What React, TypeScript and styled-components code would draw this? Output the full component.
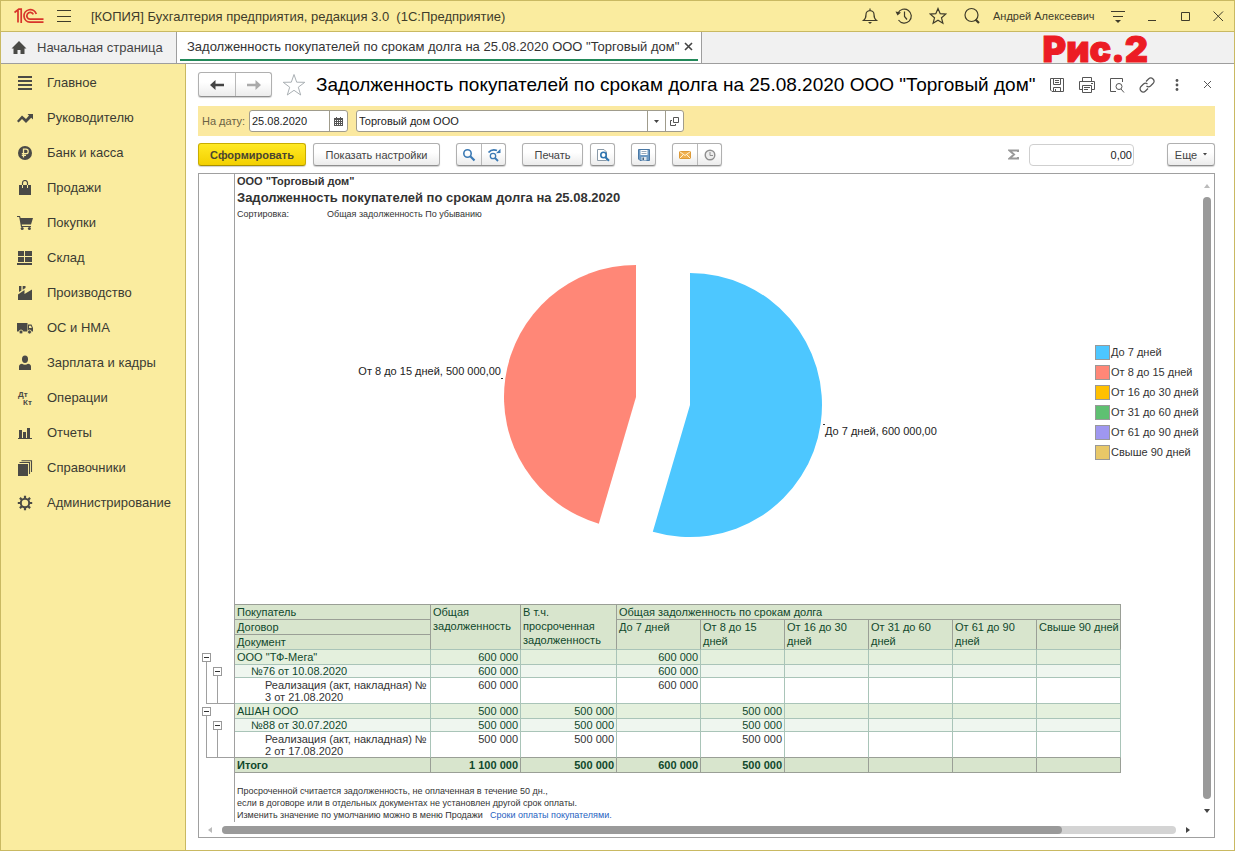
import React from "react";
import styled, { createGlobalStyle, css } from "styled-components";

const GlobalStyle = createGlobalStyle`
  *, *::before, *::after { box-sizing: border-box; }
  html, body { margin: 0; padding: 0; }
  body {
    font-family: "Liberation Sans", Arial, sans-serif;
    font-size: 13px;
    color: #333;
    background: #fff;
  }
  button, input { font-family: inherit; }
  svg { display: block; flex: none; }
`;

/* ---------- window ---------- */

const Window = styled.div`
  display: flex;
  flex-direction: column;
  min-height: 100vh;
  border: 1px solid #c9b962;
  background: #fff;
`;

const TitleBar = styled.header`
  display: flex;
  align-items: center;
  height: 31px;
  padding: 0 5px 0 13px;
  background: #faec9f;
  border-bottom: 1px solid #c9b962;
`;

const PlainButton = styled.button`
  display: flex;
  align-items: center;
  justify-content: center;
  flex: none;
  padding: 0;
  border: 0;
  background: none;
  color: inherit;
`;

const IconButton = styled(PlainButton)`
  width: 22px;
  height: 22px;
  color: #3f3c2a;
`;

const MenuButton = styled(IconButton)`
  margin-left: 8px;
`;

const AppTitle = styled.span`
  flex: 1;
  margin-left: 16px;
  white-space: pre;
  overflow: hidden;
  color: #3f3c2a;
`;

const TitleTools = styled.div`
  display: flex;
  gap: 12px;
`;

const UserLink = styled.a`
  margin: 0 10px;
  width: 104px;
  white-space: nowrap;
  font-size: 11px;
  color: #3f3c2a;
  text-decoration: none;
`;

const WindowTools = styled.div`
  display: flex;
  gap: 11px;
  margin-left: 12px;
`;

const TabBar = styled.nav`
  display: flex;
  height: 32px;
  background: #f1f1f1;
  border-bottom: 1px solid #9e9e9e;
`;

const HomeTab = styled.a`
  display: flex;
  align-items: center;
  gap: 10px;
  width: 176px;
  padding-left: 10px;
  border-right: 1px solid #9e9e9e;
  color: #444;
  text-decoration: none;
  white-space: nowrap;
`;

const ActiveTab = styled.div`
  display: flex;
  padding: 0 3px 2px;
  border-right: 1px solid #9e9e9e;
  background: #fff;
`;

const ActiveTabInner = styled.div`
  display: flex;
  align-items: center;
  justify-content: space-between;
  width: 518px;
  padding: 2px 4px 0 7px;
  border-bottom: 2px solid #23895a;
  white-space: nowrap;
`;

const TabClose = styled(PlainButton)`
  width: 11px;
  height: 11px;
`;

const FigureMark = styled.span`
  margin: 0 86px 0 auto;
  font-family: Inter, "DejaVu Sans", sans-serif;
  font-weight: 900;
  font-size: 36px;
  line-height: 35px;
  color: #ec1c24;
  -webkit-text-stroke: 1px #ec1c24;
  paint-order: stroke fill;
`;

const Body = styled.div`
  display: flex;
  flex: 1;
`;

/* ---------- sidebar ---------- */

const Sidebar = styled.nav`
  flex: none;
  width: 185px;
  padding-top: 1px;
  background: #faec9f;
  border-right: 1px solid #c9b962;
`;

const SideLink = styled.a`
  display: flex;
  align-items: center;
  gap: 14px;
  height: 35px;
  padding-left: 16px;
  color: #3b3b33;
  text-decoration: none;
  white-space: nowrap;
`;

/* ---------- page header ---------- */

const Main = styled.main`
  display: flex;
  flex-direction: column;
  flex: 1;
  min-width: 0;
  padding: 8px 19px 12px 12px;
`;

const PageHead = styled.div`
  display: flex;
  align-items: center;
  height: 25px;
`;

const raised = css`
  border: 1px solid #b0b0b0;
  border-bottom-color: #8f8f8f;
  border-radius: 3px;
  background: linear-gradient(#ffffff 40%, #ececec);
  box-shadow: 0 1px 1px #d0d0d0;
`;

const ButtonGroup = styled.div`
  display: flex;
  flex: none;
  ${raised}
`;

const GroupButton = styled(PlainButton)<{ $w: number }>`
  width: ${(p) => p.$w}px;
  & + & { border-left: 1px solid #b8b8b8; }
`;

const NavGroup = styled(ButtonGroup)`
  height: 25px;
`;

const StarButton = styled(PlainButton)`
  width: 24px;
  height: 24px;
  margin: 0 10px;
`;

const PageTitle = styled.h1`
  flex: 1;
  margin: 0;
  font-size: 19px;
  font-weight: normal;
  line-height: 24px;
  color: #000;
  white-space: nowrap;
`;

const HeadTools = styled.div`
  display: flex;
  gap: 8px;
  margin-right: -3px;
  color: #555;
`;

const HeadButton = styled(PlainButton)`
  width: 22px;
  height: 22px;
`;

const FilterBar = styled.div`
  display: flex;
  align-items: center;
  height: 30px;
  margin-top: 9px;
  padding-left: 4px;
  background: #fbe9a0;
`;

const FilterLabel = styled.label`
  width: 47px;
  font-size: 11px;
  color: #6b6244;
  white-space: nowrap;
`;

const Field = styled.div<{ $w: number }>`
  display: flex;
  width: ${(p) => p.$w}px;
  height: 22px;
  margin-right: 8px;
  border: 1px solid #a09c8c;
  border-radius: 3px;
  background: #fff;
  overflow: hidden;
`;

const FieldInput = styled.input`
  flex: 1;
  min-width: 0;
  padding: 0 2px;
  border: 0;
  outline: 0;
  background: none;
  font-size: 11px;
  color: #222;
`;

const FieldButton = styled(PlainButton)`
  width: 18px;
  border-left: 1px solid #a09c8c;
  color: #444;
`;

const Toolbar = styled.div`
  display: flex;
  height: 23px;
  margin: 7px 0;
`;

const ToolButton = styled.button<{ $w: number; $gap: number }>`
  display: flex;
  align-items: center;
  justify-content: center;
  flex: none;
  width: ${(p) => p.$w}px;
  margin-right: ${(p) => p.$gap}px;
  padding: 0;
  font-size: 11px;
  color: #444;
  white-space: nowrap;
  ${raised}
`;

const PrimaryButton = styled(ToolButton)`
  border-color: #c9ad00;
  border-bottom-color: #a89000;
  background: linear-gradient(#ffe924, #f3d000);
  font-weight: bold;
  color: #4a4530;
`;

const ToolGroup = styled(ButtonGroup)<{ $gap: number }>`
  margin-right: ${(p) => p.$gap}px;
`;

const SumBox = styled.label`
  display: flex;
  align-items: center;
  gap: 10px;
  margin: 0 33px 0 auto;
  color: #999;
`;

const SumInput = styled.input`
  width: 105px;
  height: 22px;
  padding: 0 1px;
  border: 1px solid #cfcfcf;
  border-radius: 4px;
  text-align: right;
  font-size: 11px;
  color: #222;
`;

/* ---------- report ---------- */

const Frame = styled.section`
  display: flex;
  flex-direction: column;
  flex: 1;
  border: 1px solid #a0a0a0;
`;

const FrameBody = styled.div`
  display: flex;
  flex: 1;
`;

const Sheet = styled.div`
  display: grid;
  flex: 1;
  min-width: 0;
  grid-template-columns: 36px minmax(0, 1fr);
  grid-template-rows: auto auto auto 1fr;
`;

const Gutter = styled.div`
  border-right: 1px solid #a0a0a0;
`;

const ReportHead = styled.div`
  padding: 0 2px 1px;
`;

const Company = styled.div`
  font-size: 11px;
  line-height: 14px;
  font-weight: bold;
`;

const ReportTitle = styled.h2`
  margin: 1px 0 0;
  font-size: 13px;
  line-height: 18px;
  font-weight: bold;
`;

const SortRow = styled.div`
  display: grid;
  grid-template-columns: 90px auto;
  font-size: 9px;
  line-height: 14px;
`;

const ChartArea = styled.div`
  display: flex;
  align-items: center;
  justify-content: space-between;
  height: 382px;
  padding-right: 3px;
`;

const Plot = styled.div`
  display: flex;
  flex: 1;
  justify-content: center;
`;

const Legend = styled.ul`
  flex: none;
  width: 102px;
  margin: 0 0 22px;
  padding: 0;
  list-style: none;
`;

const LegendItem = styled.li`
  display: flex;
  align-items: center;
  gap: 1px;
  height: 20px;
  font-size: 11px;
  white-space: nowrap;
`;

const Swatch = styled.span<{ $c: string }>`
  width: 15px;
  height: 15px;
  flex: none;
  border: 1px solid #999;
  background: ${(p) => p.$c};
`;

const Outline = styled(Gutter)`
  padding-top: 46px;
`;

const OutlineGroup = styled.div`
  position: relative;
  display: flex;
  gap: 2px;
  height: 54px;
  padding: 3px 0 0 3px;
  &::after {
    content: "";
    position: absolute;
    left: 7px;
    right: 0;
    bottom: 0;
    border-bottom: 1px solid #a0a0a0;
  }
`;

const Branch = styled.div<{ $drop: number }>`
  display: flex;
  flex-direction: column;
  align-items: center;
  width: 9px;
  padding-top: ${(p) => p.$drop}px;
`;

const Toggle = styled(PlainButton)`
  width: 9px;
  height: 9px;
  border: 1px solid #999;
  background: #fff;
  &::after {
    content: "";
    width: 5px;
    height: 1px;
    background: #333;
  }
`;

const Stem = styled.span`
  flex: 1;
  width: 1px;
  background: #a0a0a0;
`;

const Table = styled.table`
  width: 886px;
  table-layout: fixed;
  border-collapse: separate;
  border-spacing: 0;
  border-top: 1px solid #9a9f96;
  font-size: 11px;
  color: #10482c;
`;

const Th = styled.th<{ $end?: boolean }>`
  height: 15px;
  padding: 0 2px;
  border-right: 1px solid #9a9f96;
  border-bottom: 1px solid ${(p) => (p.$end ? "#a9c4b8" : "#9a9f96")};
  background: #d8e5cd;
  font-weight: normal;
  line-height: 14px;
  text-align: left;
  vertical-align: top;
  white-space: nowrap;
`;

type Level = 0 | 1 | 2 | 3;

const rowLooks = {
  0: css`height: 15px; background: #e4f0dd; line-height: 14px;`,
  1: css`height: 13px; background: #eff6ef; line-height: 12px;`,
  2: css`height: 26px; padding-top: 1px; background: #fff; line-height: 12px; color: #333;`,
  3: css`height: 15px; background: #d8e5cd; line-height: 14px; font-weight: bold; border-color: #9a9f96;`,
};

const Td = styled.td<{ $level: Level; $num?: boolean; $last?: boolean }>`
  padding: 0 2px 0 ${(p) => (p.$num || p.$level === 3 ? 2 : 2 + p.$level * 14)}px;
  border: 0 solid #a9c4b8;
  border-width: 0 1px 1px 0;
  text-align: ${(p) => (p.$num ? "right" : "left")};
  vertical-align: top;
  white-space: nowrap;
  ${(p) => rowLooks[p.$level]}
  ${(p) => p.$last && css`border-bottom-color: #9a9f96;`}
`;

const Notes = styled.div`
  padding: 12px 2px 0;
  font-size: 9px;
  line-height: 12px;
  white-space: nowrap;
`;

const NoteLine = styled.div`
  display: flex;
`;

const NoteCell = styled.span`
  width: 251px;
  overflow: hidden;
`;

const NoteLink = styled.a`
  margin-left: 2px;
  color: #1f5fbf;
  text-decoration: none;
`;

const VScroll = styled.div`
  display: flex;
  flex-direction: column;
  align-items: center;
  width: 14px;
  padding: 8px 0;
`;

const VThumb = styled.div`
  flex: 1;
  width: 8px;
  margin: 8px 0;
  border-radius: 4px;
  background: #9a9a9a;
`;

const HScroll = styled.div`
  display: flex;
  align-items: center;
  height: 15px;
  padding: 0 22px 0 7px;
`;

const HTrack = styled.div`
  flex: 1;
  height: 8px;
  margin: 0 8px;
  border-radius: 4px;
  background: #d4d4d4;
`;

const HThumb = styled.div`
  width: 88%;
  height: 8px;
  border-radius: 4px;
  background: #9a9a9a;
`;

const ScrollButton = styled(PlainButton)`
  width: 8px;
  height: 7px;
`;

/* ---------- icons ---------- */

const Line = ({ d, size = 18, w = 1, color = "currentColor" }: { d: string; size?: number; w?: number; color?: string }) => (
  <svg width={size} height={size} viewBox={`0 0 ${size} ${size}`} fill="none" stroke={color} strokeWidth={w}>
    <path d={d} />
  </svg>
);

const Solid = ({ children, size = 16 }: { children: React.ReactNode; size?: number }) => (
  <svg width={size} height={size} viewBox={`0 0 ${size} ${size}`} fill="#4a4a46">
    {children}
  </svg>
);

const Logo = () => (
  <svg width="31" height="16" viewBox="0 0 31 16" fill="none" stroke="#d8342b" strokeWidth="1.7">
    <path d="M.5 4.5 4 1.800V14.500M7.200 15V1.200H4.500" />
    <path d="M22.300 6A6.300 6.300 0 1 0 16 14.200H29.500" />
    <path d="M19.300 6.300A3.400 3.400 0 1 0 16 11.200H29.500" />
  </svg>
);

const sideIcons: Record<string, React.ReactNode> = {
  main: <path d="M1 1h14v2H1zM1 5h14v2H1zM1 9h14v2H1zM1 13h14v2H1z" />,
  trend: <path d="M0 11 5 5.5 9 9 12 5.5 10.5 4H16V9.5L14.2 7.8 9 13 5 9 1.6 12.5z" />,
  bank: (
    <>
      <circle cx="8" cy="8" r="7" />
      <path d="M6.5 12.5V4.2H9a2.2 2.2 0 0 1 0 4.4H4.8M4.8 10.4H9" fill="none" stroke="#faec9f" strokeWidth="1.3" />
    </>
  ),
  bag: (
    <>
      <path d="M2 5h12v10H2z" />
      <path d="M5.5 8V3a2.500 2.500 0 0 1 5 0V8" fill="none" stroke="#4a4a46" strokeWidth="1.2" />
      <path d="M5.5 5V8M10.5 5V8" stroke="#faec9f" strokeWidth="1" />
    </>
  ),
  cart: (
    <>
      <path d="M0 1h3l.6 2H16l-2 6.5H4.8L5 11h9v1H4L2.2 2H0z" />
      <circle cx="5.2" cy="13.4" r="1.5" />
      <circle cx="12.4" cy="13.4" r="1.5" />
    </>
  ),
  stock: <path d="M1 1h6v5H1zM8 1h7v5H8zM1 7h6v5H1zM8 7h7v5H8zM0 13h15v2H0z" />,
  factory: <path d="M1 15V9.500L7.500 5V9L15 4.500V15zM2 1h2.400v4.500L2 7zM5.700 1H8.500v2L5.700 4.700z" />,
  truck: (
    <>
      <path d="M0 3h10.500v8.500H0zM11 4.500h3.500L16 8v3.500h-5z" />
      <path d="M12 5.700h2l.8 2.300H12z" fill="#faec9f" />
      <circle cx="4" cy="12" r="2" stroke="#faec9f" strokeWidth=".8" />
      <circle cx="12.500" cy="12" r="2" stroke="#faec9f" strokeWidth=".8" />
    </>
  ),
  person: (
    <>
      <ellipse cx="8" cy="4.300" rx="3" ry="3.700" />
      <path d="M2 15v-3.500Q2 9.300 5 8.800 8 10.500 11 8.800 14 9.300 14 11.500V15z" />
    </>
  ),
  ledger: (
    <>
      <text x="1" y="7" fontSize="8" fontWeight="bold" fontFamily="Liberation Sans, sans-serif">Дт</text>
      <text x="6" y="15" fontSize="8" fontWeight="bold" fontFamily="Liberation Sans, sans-serif">Кт</text>
    </>
  ),
  bars: <path d="M1 13h14v1H1zM2 5h3v8H2zM6 7h3v6H6zM10 3h3v10h-3z" />,
  books: (
    <>
      <path d="M1 4h10v12H1z" />
      <path d="M2.500 2.500H12.500V14M4.500 .7H14.500V12" fill="none" stroke="#4a4a46" strokeWidth="1.100" />
    </>
  ),
  gear: (
    <>
      <circle cx="8" cy="8" r="4.200" fill="none" stroke="#4a4a46" strokeWidth="2" />
      <path
        d="M8 .8V3.500M8 12.500V15.200M.8 8H3.500M12.500 8H15.200M2.900 2.900 4.800 4.800M11.200 11.200 13.100 13.100M13.100 2.900 11.200 4.800M4.800 11.200 2.900 13.100"
        stroke="#4a4a46"
        strokeWidth="2.200"
      />
    </>
  ),
};

const sections: [string, string][] = [
  ["main", "Главное"],
  ["trend", "Руководителю"],
  ["bank", "Банк и касса"],
  ["bag", "Продажи"],
  ["cart", "Покупки"],
  ["stock", "Склад"],
  ["factory", "Производство"],
  ["truck", "ОС и НМА"],
  ["person", "Зарплата и кадры"],
  ["ledger", "Операции"],
  ["bars", "Отчеты"],
  ["books", "Справочники"],
  ["gear", "Администрирование"],
];

const Magnifier = () => (
  <svg width="14" height="14" viewBox="0 0 14 14" fill="none" stroke="#3c7ab4">
    <circle cx="5.500" cy="5.500" r="3.700" strokeWidth="1.600" />
    <path d="M8.300 8.300 12.500 12.500" strokeWidth="2.200" />
  </svg>
);

const SearchNext = () => (
  <svg width="14" height="14" viewBox="0 0 14 14" fill="none" stroke="#3c7ab4">
    <circle cx="6" cy="8" r="2.700" strokeWidth="1.300" />
    <path d="M8 10 11 13" strokeWidth="1.800" />
    <path d="M1.500 4.500Q5 .5 10 2.500" strokeWidth="1.800" />
    <path d="M9 5.300 13.500 5V.8z" fill="#3c7ab4" stroke="none" />
  </svg>
);

const Preview = () => (
  <svg width="14" height="14" viewBox="0 0 14 14" fill="none">
    <path d="M1.500 1.500H8L10.500 4V12.500H1.500z" fill="#fff" stroke="#8a9aa8" />
    <circle cx="7.500" cy="7" r="2.700" stroke="#2f75b0" strokeWidth="1.600" />
    <path d="M9.500 9.200 13 12.800" stroke="#2f75b0" strokeWidth="2" />
  </svg>
);

const Disk = () => (
  <svg width="12" height="12" viewBox="0 0 12 12">
    <path d="M.5 .5H11.500V11.500H2L.5 10z" fill="#6f9bc4" stroke="#4a78a5" />
    <path d="M2.500 1H9.500V6H2.500z" fill="#fff" />
    <path d="M3.500 2.500H8.500M3.500 4.500H8.500" stroke="#9ab" />
    <path d="M3.500 8H8.500V11.500H3.500z" fill="#dde6ee" />
    <path d="M4.500 8.500H6V11H4.500z" fill="#47617a" />
  </svg>
);

const Mail = () => (
  <svg width="12" height="8" viewBox="0 0 12 8">
    <path d="M.5 .5H11.500V7.500H.5z" fill="#f0b050" stroke="#dd9a38" />
    <path d="M.5 .5 6 4.500 11.500 .5M.5 7.500 4.500 3.500M11.500 7.500 7.500 3.500" fill="none" stroke="#fff3d8" />
  </svg>
);

const Clock = () => (
  <svg width="12" height="12" viewBox="0 0 12 12" fill="none" stroke="#8f8f8f">
    <circle cx="6" cy="6" r="4.800" strokeWidth="1.400" fill="#ececec" />
    <path d="M6 3V6.500H9" />
  </svg>
);

const Calendar = () => (
  <svg width="9" height="9" viewBox="0 0 9 9">
    <path d="M0 1H9V9H0zM2 0H3V1H2zM6 0H7V1H6z" fill="#555" />
    <path d="M1 3.500H8M1 5.500H8M1 7.500H8" stroke="#fff" strokeDasharray="1 1" />
  </svg>
);

const OpenForm = () => (
  <svg width="9" height="9" viewBox="0 0 9 9" fill="none" stroke="#555">
    <path d="M3.500 .5H8.500V5.500H3.500zM2 3.500H.5V8.500H5.500V7" />
  </svg>
);

const Arrow = ({ color, flip }: { color: string; flip?: boolean }) => (
  <svg width="14" height="10" viewBox="0 0 14 10">
    <path
      d={flip ? "M14 5 8.500 0V3.800H0V6.200H8.500V10z" : "M0 5 5.500 0V3.800H14V6.200H5.500V10z"}
      fill={color}
    />
  </svg>
);

const triangles = {
  up: "M1 5 4 1 7 5z",
  down: "M1 1 4 5 7 1z",
  left: "M6 0 2 3 6 6z",
  right: "M2 0 6 3 2 6z",
};

const Triangle = ({ dir, color }: { dir: keyof typeof triangles; color: string }) => (
  <svg width="8" height="6" viewBox="0 0 8 6">
    <path d={triangles[dir]} fill={color} />
  </svg>
);

/* ---------- data ---------- */

const legend: [string, string][] = [
  ["#4dc7ff", "До 7 дней"],
  ["#ff8777", "От 8 до 15 дней"],
  ["#ffc000", "От 16 до 30 дней"],
  ["#5fc072", "От 31 до 60 дней"],
  ["#9f97f0", "От 61 до 90 дней"],
  ["#e8c868", "Свыше 90 дней"],
];

const columnWidths = [196, 90, 96, 84, 84, 84, 84, 84, 84];

const periods: React.ReactNode[] = [
  "До 7 дней",
  <>От 8 до 15<br />дней</>,
  <>От 16 до 30<br />дней</>,
  <>От 31 до 60<br />дней</>,
  <>От 61 до 90<br />дней</>,
  "Свыше 90 дней",
];

type Row = { level: Level; name: React.ReactNode; values: string[]; last?: boolean };

const tfMega = ["600 000", "", "600 000", "", "", "", "", ""];
const ashan = ["500 000", "500 000", "", "500 000", "", "", "", ""];

const rows: Row[] = [
  { level: 0, name: 'ООО "ТФ-Мега"', values: tfMega },
  { level: 1, name: "№76 от 10.08.2020", values: tfMega },
  { level: 2, name: <>Реализация (акт, накладная) №<br />3 от 21.08.2020</>, values: tfMega },
  { level: 0, name: "АШАН ООО", values: ashan },
  { level: 1, name: "№88 от 30.07.2020", values: ashan },
  { level: 2, name: <>Реализация (акт, накладная) №<br />2 от 17.08.2020</>, values: ashan, last: true },
  { level: 3, name: "Итого", values: ["1 100 000", "500 000", "600 000", "500 000", "", "", "", ""] },
];

const Pie = () => (
  <svg width="620" height="382" viewBox="0 0 620 382" fontFamily="Liberation Sans, sans-serif" fontSize="11">
    <path d="M281 175 V43 A132 132 0 0 0 243.800 301.650 Z" fill="#ff8777" />
    <path d="M335 183 V51 A132 132 0 1 1 297.800 309.650 Z" fill="#4dc7ff" />
    <text x="146" y="153" textAnchor="end" fill="#222">От 8 до 15 дней, 500 000,00</text>
    <text x="470" y="213" fill="#222">До 7 дней, 600 000,00</text>
    <path d="M146 156.500h2M468 202.500h2" stroke="#333" />
  </svg>
);

const caption = 'Задолженность покупателей по срокам долга на 25.08.2020 ООО "Торговый дом"';

export default function App() {
  return (
    <Window>
      <GlobalStyle />
      <TitleBar>
        <Logo />
        <MenuButton aria-label="Меню">
          <Line size={16} d="M1 2.5H15M1 8.5H15M1 13.5H15" />
        </MenuButton>
        <AppTitle>{"[КОПИЯ] Бухгалтерия предприятия, редакция 3.0  (1С:Предприятие)"}</AppTitle>
        <TitleTools>
          <IconButton aria-label="Оповещения">
            <svg width="18" height="18" viewBox="0 0 18 18" fill="none" stroke="currentColor" strokeWidth="1.2">
              <path d="M2.500 13.500Q5 11.500 5 7.500 5 4 9 3.500 13 4 13 7.500 13 11.500 15.500 13.500zM9 3.500V1.500" />
              <path d="M7 15H11L9 17z" fill="currentColor" stroke="none" />
            </svg>
          </IconButton>
          <IconButton aria-label="История">
            <svg width="18" height="18" viewBox="0 0 18 18" fill="none" stroke="currentColor" strokeWidth="1.2">
              <path d="M3 6A7 7 0 1 1 3.500 13M9.500 4.500V9.500L12 12.500" />
              <path d="M.5 4.500 2.500 8.500 6 5.500z" fill="currentColor" stroke="none" />
            </svg>
          </IconButton>
          <IconButton aria-label="Избранное">
            <Line w={1.2} d="M9 1.500 11.200 6.700 16.800 7.100 12.500 10.800 13.900 16.300 9 13.300 4.100 16.300 5.500 10.800 1.200 7.100 6.800 6.700z" />
          </IconButton>
          <IconButton aria-label="Поиск">
            <svg width="18" height="18" viewBox="0 0 18 18" fill="none" stroke="currentColor">
              <circle cx="8.500" cy="8" r="6.500" strokeWidth="1.200" />
              <path d="M12.500 12.500 16 16" strokeWidth="2.200" />
            </svg>
          </IconButton>
        </TitleTools>
        <UserLink href="#user">Андрей Алексеевич</UserLink>
        <IconButton aria-label="Настройки">
          <svg width="16" height="16" viewBox="0 0 16 16">
            <path d="M1 3.500H15M3 8.500H13" stroke="#3f3c2a" />
            <path d="M5 12H11L8 15z" fill="#3f3c2a" />
          </svg>
        </IconButton>
        <WindowTools>
          <IconButton aria-label="Свернуть">
            <Line size={16} d="M4 12.500H12" />
          </IconButton>
          <IconButton aria-label="Развернуть">
            <Line size={16} d="M4.500 4.500H12.500V12.500H4.500z" />
          </IconButton>
          <IconButton aria-label="Закрыть">
            <Line size={16} d="M3.500 3.500 13 13M13 3.500 3.500 13" />
          </IconButton>
        </WindowTools>
      </TitleBar>

      <TabBar>
        <HomeTab href="#home">
          <Solid>
            <path d="M8 1 15.500 8.500H13.500V14H9.500V10H6.500V14H2.500V8.500H.5z" />
          </Solid>
          Начальная страница
        </HomeTab>
        <ActiveTab>
          <ActiveTabInner>
            {caption}
            <TabClose aria-label="Закрыть вкладку">
              <Line size={9} w={1.6} d="M1 1 8 8M8 1 1 8" color="#444" />
            </TabClose>
          </ActiveTabInner>
        </ActiveTab>
        <FigureMark>Рис.2</FigureMark>
      </TabBar>

      <Body>
        <Sidebar>
          {sections.map(([icon, label]) => (
            <SideLink key={icon} href={`#${icon}`}>
              <Solid>{sideIcons[icon]}</Solid>
              {label}
            </SideLink>
          ))}
        </Sidebar>

        <Main>
          <PageHead>
            <NavGroup>
              <GroupButton $w={36} aria-label="Назад">
                <Arrow color="#444" />
              </GroupButton>
              <GroupButton $w={36} aria-label="Вперед">
                <Arrow color="#aaa" flip />
              </GroupButton>
            </NavGroup>
            <StarButton aria-label="В избранное">
              <Line
                size={24}
                color="#aab0b4"
                d="M12 1.500 14.700 9.200 22.800 9.300 16.300 14.200 18.700 22 12 17.300 5.300 22 7.700 14.200 1.200 9.300 9.300 9.200z"
              />
            </StarButton>
            <PageTitle>{caption}</PageTitle>
            <HeadTools>
              <HeadButton aria-label="Сохранить">
                <Line size={16} d="M1.500 1.500H14.500V14.500H3L1.500 13zM4.500 1.500V7.500H11.500V1.500M6 3.500H10M6 5.500H10M4.500 14.500V10.500H11.500V14.500M6.500 12V14" />
              </HeadButton>
              <HeadButton aria-label="Печать">
                <Line size={16} d="M3.500 4.500V.5H12.500V4.500M3.500 12.500H.5V4.500H15.500V12.500H12.500M3.500 8.500H12.500V15.500H3.500zM5 10.500H11M5 12.500H9M12 6.500H14" />
              </HeadButton>
              <HeadButton aria-label="Просмотр">
                <Line size={16} d="M7 14.500H1.500V1.500H13.500V5M13 9.500A3 3 0 1 1 7 9.500 3 3 0 1 1 13 9.500M12 12 15 15.500" />
              </HeadButton>
              <HeadButton aria-label="Ссылка">
                <svg width="16" height="16" viewBox="0 0 16 16" fill="none" stroke="currentColor" strokeWidth="1.2">
                  <path d="M7 4.500 9.500 2A3 3 0 0 1 14 6.500L11.500 9A3 3 0 0 1 7.500 9" />
                  <path d="M9 11.500 6.500 14A3 3 0 0 1 2 9.500L4.500 7A3 3 0 0 1 8.500 7" />
                </svg>
              </HeadButton>
              <HeadButton aria-label="Еще действия">
                <svg width="4" height="12" viewBox="0 0 4 12" fill="#555">
                  <circle cx="2" cy="1.500" r="1.400" />
                  <circle cx="2" cy="6" r="1.400" />
                  <circle cx="2" cy="10.500" r="1.400" />
                </svg>
              </HeadButton>
              <HeadButton aria-label="Закрыть">
                <Line size={9} d="M1 1 8 8M8 1 1 8" />
              </HeadButton>
            </HeadTools>
          </PageHead>

          <FilterBar>
            <FilterLabel htmlFor="report-date">На дату:</FilterLabel>
            <Field $w={99}>
              <FieldInput id="report-date" defaultValue="25.08.2020" />
              <FieldButton aria-label="Выбрать дату">
                <Calendar />
              </FieldButton>
            </Field>
            <Field $w={328}>
              <FieldInput aria-label="Организация" defaultValue="Торговый дом ООО" />
              <FieldButton aria-label="Выбрать из списка">
                <svg width="5" height="3" viewBox="0 0 5 3">
                  <path d="M0 0H5L2.500 3z" fill="#444" />
                </svg>
              </FieldButton>
              <FieldButton aria-label="Открыть">
                <OpenForm />
              </FieldButton>
            </Field>
          </FilterBar>

          <Toolbar>
            <PrimaryButton $w={108} $gap={7}>Сформировать</PrimaryButton>
            <ToolButton $w={127} $gap={16}>Показать настройки</ToolButton>
            <ToolGroup $gap={16}>
              <GroupButton $w={24} aria-label="Найти"><Magnifier /></GroupButton>
              <GroupButton $w={24} aria-label="Найти далее"><SearchNext /></GroupButton>
            </ToolGroup>
            <ToolButton $w={61} $gap={7}>Печать</ToolButton>
            <ToolButton $w={25} $gap={16} aria-label="Предварительный просмотр"><Preview /></ToolButton>
            <ToolButton $w={25} $gap={16} aria-label="Сохранить отчет"><Disk /></ToolButton>
            <ToolGroup $gap={0}>
              <GroupButton $w={24} aria-label="Отправить"><Mail /></GroupButton>
              <GroupButton $w={24} aria-label="Рассылка"><Clock /></GroupButton>
            </ToolGroup>
            <SumBox>
              <Line size={11} w={2} d="M10 3V1.500H1.500L6 5.500 1.500 9.500H10V8" />
              <SumInput aria-label="Сумма" defaultValue="0,00" />
            </SumBox>
            <ToolButton $w={48} $gap={0}>
              Еще
              <svg width="10" height="3" viewBox="0 0 10 3">
                <path d="M6 0H10L8 2.500z" fill="#444" />
              </svg>
            </ToolButton>
          </Toolbar>

          <Frame>
            <FrameBody>
              <Sheet>
                <Gutter />
                <ReportHead>
                  <Company>ООО "Торговый дом"</Company>
                  <ReportTitle>Задолженность покупателей по срокам долга на 25.08.2020</ReportTitle>
                  <SortRow>
                    <span>Сортировка:</span>
                    <span>Общая задолженность По убыванию</span>
                  </SortRow>
                </ReportHead>

                <Gutter />
                <ChartArea>
                  <Plot>
                    <Pie />
                  </Plot>
                  <Legend>
                    {legend.map(([color, label]) => (
                      <LegendItem key={label}>
                        <Swatch $c={color} />
                        {label}
                      </LegendItem>
                    ))}
                  </Legend>
                </ChartArea>

                <Outline>
                  {[0, 1].map((i) => (
                    <OutlineGroup key={i}>
                      <Branch $drop={0}>
                        <Toggle aria-label="Свернуть покупателя" />
                        <Stem />
                      </Branch>
                      <Branch $drop={14}>
                        <Toggle aria-label="Свернуть договор" />
                        <Stem />
                      </Branch>
                    </OutlineGroup>
                  ))}
                </Outline>
                <div>
                  <Table>
                    <colgroup>
                      {columnWidths.map((w, i) => (
                        <col key={i} width={w} />
                      ))}
                    </colgroup>
                    <thead>
                      <tr>
                        <Th>Покупатель</Th>
                        <Th rowSpan={3} $end>Общая<br />задолженность</Th>
                        <Th rowSpan={3} $end>В т.ч.<br />просроченная<br />задолженность</Th>
                        <Th colSpan={6}>Общая задолженность по срокам долга</Th>
                      </tr>
                      <tr>
                        <Th>Договор</Th>
                        {periods.map((p, i) => (
                          <Th key={i} rowSpan={2} $end>{p}</Th>
                        ))}
                      </tr>
                      <tr>
                        <Th $end>Документ</Th>
                      </tr>
                    </thead>
                    <tbody>
                      {rows.map((row, i) => (
                        <tr key={i}>
                          <Td $level={row.level} $last={row.last}>{row.name}</Td>
                          {row.values.map((v, j) => (
                            <Td key={j} $level={row.level} $last={row.last} $num>{v}</Td>
                          ))}
                        </tr>
                      ))}
                    </tbody>
                  </Table>
                </div>

                <Gutter />
                <Notes>
                  <div>Просроченной считается задолженность, не оплаченная в течение 50 дн.,</div>
                  <div>если в договоре или в отдельных документах не установлен другой срок оплаты.</div>
                  <NoteLine>
                    <NoteCell>Изменить значение по умолчанию можно в меню Продажи</NoteCell>
                    <NoteLink href="#terms">Сроки оплаты покупателями.</NoteLink>
                  </NoteLine>
                </Notes>
              </Sheet>
              <VScroll>
                <ScrollButton aria-label="Вверх"><Triangle dir="up" color="#bbb" /></ScrollButton>
                <VThumb />
                <ScrollButton aria-label="Вниз"><Triangle dir="down" color="#444" /></ScrollButton>
              </VScroll>
            </FrameBody>
            <HScroll>
              <ScrollButton aria-label="Влево"><Triangle dir="left" color="#bbb" /></ScrollButton>
              <HTrack>
                <HThumb />
              </HTrack>
              <ScrollButton aria-label="Вправо"><Triangle dir="right" color="#444" /></ScrollButton>
            </HScroll>
          </Frame>
        </Main>
      </Body>
    </Window>
  );
}
